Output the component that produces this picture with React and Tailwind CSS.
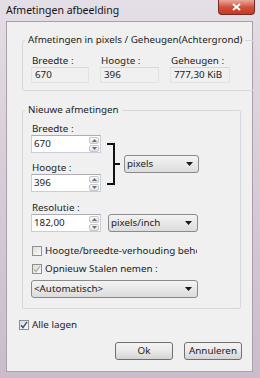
const Spinner = () => (
  <div className="flex flex-col gap-[1px] pr-[1px]">
    <div className="w-[10px] h-[7px] border border-[#c4c8cc] rounded-[2px] bg-gradient-to-b from-[#fafafa] to-[#e4e4e4] flex items-center justify-center">
      <svg width="5" height="3" viewBox="0 0 5 3"><path d="M2.5 0 L5 3 H0 Z" fill="#6b6b6b" /></svg>
    </div>
    <div className="w-[10px] h-[7px] border border-[#c4c8cc] rounded-[2px] bg-gradient-to-b from-[#fafafa] to-[#e4e4e4] flex items-center justify-center">
      <svg width="5" height="3" viewBox="0 0 5 3"><path d="M0 0 H5 L2.5 3 Z" fill="#6b6b6b" /></svg>
    </div>
  </div>
)

const NumInput = ({ value }) => (
  <div className="w-[70px] h-[18px] bg-white border border-[#c9ced6] border-t-[#abadb3] flex items-center justify-between pl-[2px]">
    <span>{value}</span>
    <Spinner />
  </div>
)

const Combo = ({ label, className }) => (
  <div className={`h-[18px] border border-[#8a8a8a] rounded-[3px] bg-gradient-to-b from-[#f4f4f4] to-[#dcdcdc] flex items-center justify-between pl-[2px] pr-[5px] ${className}`}>
    <span className="whitespace-nowrap">{label}</span>
    <svg width="7" height="4" viewBox="0 0 7 4"><path d="M0 0 H7 L3.5 4 Z" fill="#1a1a1a" /></svg>
  </div>
)

const Check = ({ checked, disabled, label }) => (
  <div className="flex items-center gap-[3px] leading-[14px]">
    <div className="shrink-0 w-[10px] h-[10px] border border-[#8e8f8f] bg-gradient-to-br from-[#dcdcdc] to-[#fbfbfb] flex items-center justify-center">
      {checked && (
        <svg width="8" height="8" viewBox="0 0 8 8">
          <path d="M1 4.2 L3 6.5 L7 0.8" fill="none" stroke={disabled ? "#b4b4b4" : "#3a4f8a"} strokeWidth="1.4" />
        </svg>
      )}
    </div>
    <span className="whitespace-nowrap">{label}</span>
  </div>
)

const Button = ({ children }) => (
  <button className="w-[58px] h-[18px] border border-[#707070] rounded-[3px] bg-gradient-to-b from-[#f3f3f3] via-[#e9e9e9] to-[#d4d4d4] leading-[16px] text-[#1a1a1a]">
    {children}
  </button>
)

export default function App() {
  return (
    <div className="w-[260px] h-[378px] flex flex-col bg-gradient-to-b from-[#e4dee6] via-[#d6cbd6] to-[#cbbccb] text-[9.8px] text-[#1c1c1c] font-['Noto_Sans','Open_Sans',sans-serif] overflow-hidden">
      <div className="h-[21px] flex justify-between shrink-0">
        <span className="pl-[6px] pt-[3px] text-[10.5px] text-[#141414] whitespace-nowrap">Afmetingen afbeelding</span>
        <div className="mr-[5px] w-[37px] h-[15px] rounded-b-[4px] border border-t-0 border-[#7a2a24] bg-gradient-to-b from-[#e8a89c] via-[#d2503c] to-[#c23b26] flex items-center justify-center">
          <svg width="9" height="8" viewBox="0 0 9 8">
            <path d="M1 1 L8 7 M8 1 L1 7" stroke="#fff" strokeWidth="2" />
          </svg>
        </div>
      </div>
      <div className="ml-[6px] mr-[7px] mb-[6px] flex-1 bg-[#f0f0f0] border border-[#a99fa9] flex flex-col">
        <fieldset className="mt-[10px] ml-[15px] mr-[11px] border border-[#d5d8dc] rounded-[2px] px-[8px] pb-[7px]">
          <legend className="-ml-[6px] px-[3px] leading-[16px] whitespace-nowrap">Afmetingen in pixels / Geheugen(Achtergrond)</legend>
          <div className="flex gap-[11px] mt-[6px]">
            {[["Breedte :", "670", "w-[58px]"], ["Hoogte :", "396", "w-[59px]"], ["Geheugen :", "777,30 KiB", "w-[60px]"]].map(([l, v, w]) => (
              <div key={l} className={w}>
                <div className="pl-[1px] leading-[13px] whitespace-nowrap">{l}</div>
                <div className="h-[16px] border border-[#e2e2e2] border-t-[#d8d8d8] pl-[3px] leading-[14px] whitespace-nowrap">{v}</div>
              </div>
            ))}
          </div>
        </fieldset>
        <fieldset className="mt-[11px] ml-[15px] mr-[11px] border border-[#d5d8dc] rounded-[2px] px-[8px] pb-[10px]">
          <legend className="-ml-[6px] px-[3px] leading-[16px]">Nieuwe afmetingen</legend>
          <div className="flex mt-[5px]">
            <div className="flex flex-col">
              <div className="pl-[1px] leading-[12px]">Breedte :</div>
              <NumInput value="670" />
              <div className="pl-[1px] mt-[9px] leading-[12px]">Hoogte :</div>
              <NumInput value="396" />
            </div>
            <div className="flex items-center mt-[20px] self-start ml-[6px] gap-[3px]">
              <svg width="14" height="42" viewBox="0 0 14 42">
                <path d="M0 1 H7 V41 H0 M7 21 H13" fill="none" stroke="#111" strokeWidth="2" />
              </svg>
              <Combo label="pixels" className="w-[75px]" />
            </div>
          </div>
          <div className="flex items-end gap-[7px] mt-[10px]">
            <div className="flex flex-col">
              <div className="pl-[1px] leading-[12px]">Resolutie :</div>
              <NumInput value="182,00" />
            </div>
            <Combo label="pixels/inch" className="w-[90px]" />
          </div>
          <div className="mt-[12px] w-[166px] overflow-hidden pl-[1px]">
            <Check label="Hoogte/breedte-verhouding behouden" />
          </div>
          <div className="mt-[4px] pl-[1px]">
            <Check checked disabled label="Opnieuw Stalen nemen :" />
          </div>
          <Combo label="<Automatisch>" className="mt-[4px] w-[167px]" />
        </fieldset>
        <div className="mt-[9px] ml-[12px]">
          <Check checked label="Alle lagen" />
        </div>
        <div className="mt-[10px] mr-[10px] flex justify-end gap-[11px]">
          <Button>Ok</Button>
          <Button>Annuleren</Button>
        </div>
      </div>
    </div>
  )
}
